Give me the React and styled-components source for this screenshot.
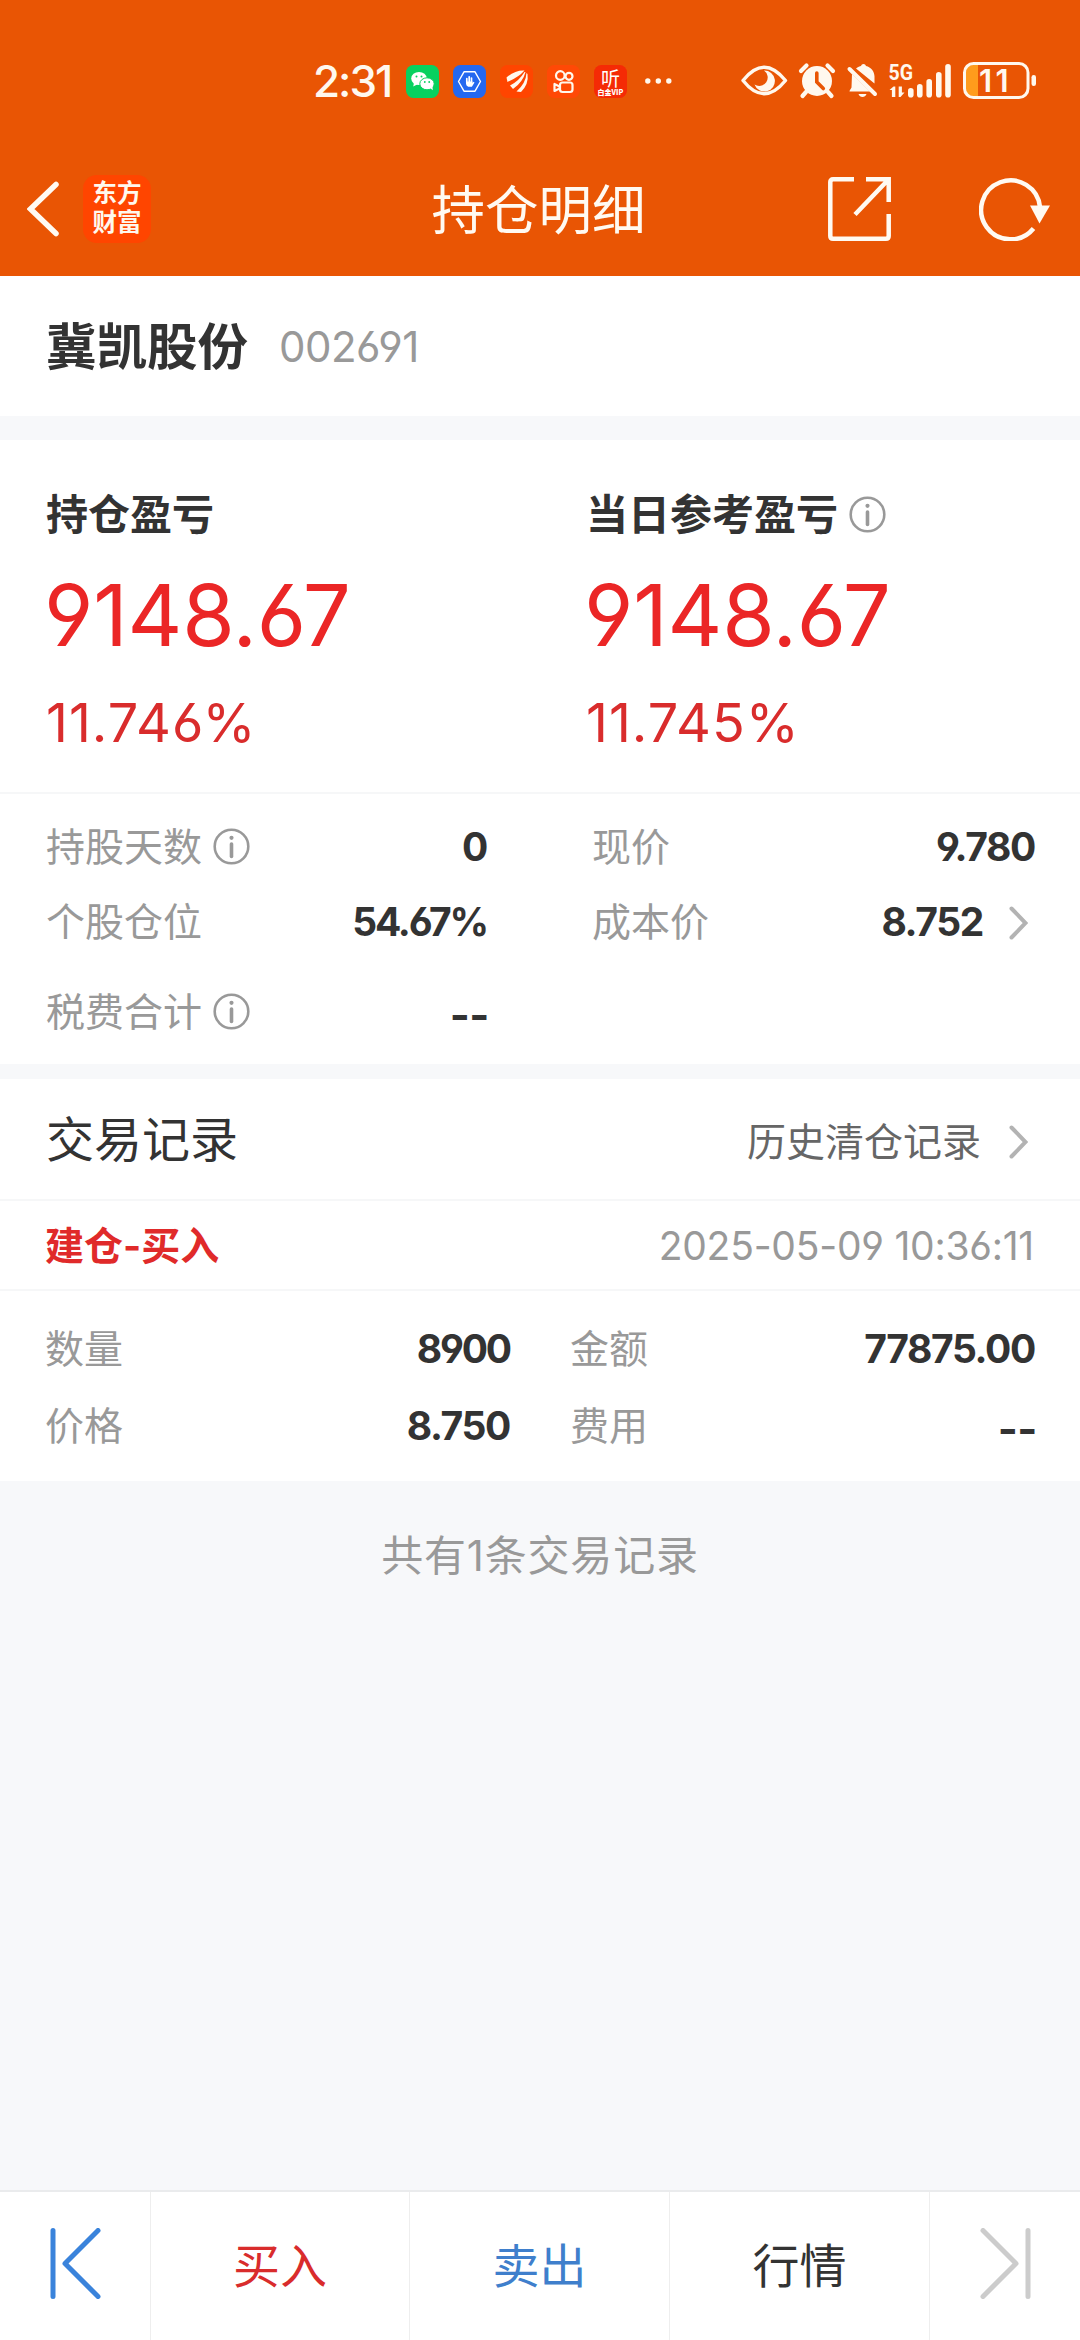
import styled, { createGlobalStyle } from "styled-components"

const GlobalStyle = createGlobalStyle`
  body {
    margin: 0;
    background-color: #f7f8fa;
    font-family: "Inter", "Noto Sans CJK SC", sans-serif;
    font-feature-settings: "cv03", "cv04";
    line-height: 1.4;
    color: #333333;
  }
`;

const Page = styled.div`
  width: 1080px;
  height: 2340px;
  display: flex;
  flex-direction: column;
  overflow: hidden;
`;

const StatusBar = styled.div`
  height: 109px;
  padding: 53px 44px 0 313px;
  box-sizing: border-box;
  display: flex;
  align-items: center;
  background-color: #e95504;
  color: #fff8ee;
`;

const Clock = styled.span`
  width: 93px;
  font-size: 44px;
  font-weight: 500;
  line-height: 56px;
  letter-spacing: -2px;
`;

const AppIcons = styled.div`
  display: flex;
  gap: 14px;
`;

const AppIcon = styled.svg`
  width: 33px;
  height: 33px;
  display: block;
`;

const Dots = styled.svg`
  margin-left: 18px;
`;

const SystemIcons = styled.svg`
  margin-left: auto;
  display: block;
`;

const Header = styled.header`
  height: 167px;
  flex: none;
  padding: 32px 30px 0 27px;
  box-sizing: border-box;
  display: grid;
  grid-template-columns: 1fr auto 1fr;
  align-items: center;
  background-color: #e95504;
`;

const HeaderSide = styled.div`
  display: flex;
  align-items: center;
  gap: ${(props) => props.$gap};
  justify-content: ${(props) => props.$justify || "flex-start"};
`;

const BrandLogo = styled.div`
  width: 68px;
  height: 68px;
  padding-bottom: 2px;
  box-sizing: border-box;
  display: flex;
  flex-direction: column;
  align-items: center;
  justify-content: center;
  border-radius: 14px;
  background-color: #ff4500;
  color: #fff8ee;
  font-size: 24.5px;
  font-weight: 700;
  line-height: 29px;
`;

const Title = styled.h1`
  margin: 0;
  padding-top: 5px;
  font-size: 53.5px;
  font-weight: 400;
  line-height: 72px;
  color: #fffaf2;
`;

const Section = styled.section`
  background-color: #ffffff;
  margin-bottom: ${(props) => props.$gap || "0"};
`;

const StockRow = styled.div`
  height: 140px;
  padding: 2px 46px 0;
  box-sizing: border-box;
  display: flex;
  align-items: center;
  gap: 31px;
`;

const StockName = styled.h2`
  margin: 0;
  font-size: 50.5px;
  font-weight: 700;
`;

const Num = styled.span`
  font-size: ${(props) => props.$size || "39px"};
  font-weight: ${(props) => props.$weight || 700};
  letter-spacing: ${(props) => props.$spacing || "-0.035em"};
  color: ${(props) => props.$color || "#333333"};
`;

// placeholder for a value that is not known yet
const Empty = styled(Num)`
  padding-top: 3px;
  font-size: 43px;
  line-height: 50px;
  letter-spacing: -0.01em;
  margin-right: -2px;
`;

const Profits = styled.div`
  height: 354px;
  box-sizing: border-box;
  padding: 45px 46px 0;
  display: grid;
  grid-template-columns: 540px 1fr;
  border-bottom: 2px solid #f6f7f8;
`;

const Profit = styled.div`
  display: flex;
  flex-direction: column;
`;

const ProfitLabel = styled.div`
  display: flex;
  align-items: center;
  gap: 11px;
  height: 60px;
  font-size: 42px;
  font-weight: 700;
`;

const ProfitValue = styled(Num)`
  margin: 21px 0 0 -2px;
  line-height: 100px;
`;

const ProfitRate = styled(Num)`
  margin-top: 27px;
  line-height: 60px;
`;

const Facts = styled.div`
  height: 270px;
  padding: 16px 45px 0 46px;
  box-sizing: border-box;
  display: grid;
  grid-template-columns: 441px 443px;
  column-gap: 105px;
  grid-template-rows: 75px 75px 105px;
`;

const Fact = styled.div`
  display: flex;
  align-items: center;
  justify-content: space-between;
`;

const FactLabel = styled.span`
  display: flex;
  align-items: center;
  gap: 11px;
  font-size: 39px;
  color: #999999;
`;

const FactValue = styled.span`
  display: flex;
  align-items: center;
  gap: 26px;
  padding-right: ${(props) => (props.$link ? "7px" : "0")};
`;

const InfoIcon = styled.svg`
  margin-bottom: 2px;
`;

const RecordsHead = styled.div`
  height: 122px;
  padding: 1px 52px 0 46px;
  display: flex;
  align-items: center;
  justify-content: space-between;
  font-size: 48px;
  border-bottom: 2px solid #f6f7f8;
  box-sizing: border-box;
`;

const HistoryLink = styled.a`
  padding-top: 5px;
  display: flex;
  align-items: center;
  gap: 28px;
  font-size: 39px;
  color: #666666;
`;

const RecordTitle = styled.div`
  height: 90px;
  padding: 2px 46px 0 45px;
  display: flex;
  align-items: center;
  justify-content: space-between;
  font-size: 39px;
  font-weight: 700;
  color: #e02a2a;
  border-bottom: 2px solid #f6f7f8;
  box-sizing: border-box;
`;

const RecordBody = styled.div`
  height: 190px;
  padding: 20px 45px 0;
  box-sizing: border-box;
  display: grid;
  grid-template-columns: 465px 465px;
  column-gap: 60px;
  grid-template-rows: 77px 77px;
`;

const Total = styled.p`
  margin: 43px 0 0;
  text-align: center;
  font-size: 42px;
  letter-spacing: 0.8px;
  line-height: 63px;
  color: #999999;
`;

const TabBar = styled.nav`
  margin-top: auto;
  height: 150px;
  flex: none;
  display: grid;
  grid-template-columns: 151px 259px 260px 260px 150px;
  background-color: #ffffff;
  border-top: 2px solid #eaebed;
  box-sizing: border-box;
`;

const Tab = styled.div`
  padding-bottom: ${(props) => (props.$color ? "1px" : "6px")};
  display: flex;
  align-items: center;
  justify-content: center;
  font-size: 47px;
  color: ${(props) => props.$color};
  border-right: 1px solid #eeeeee;

  &:last-child {
    border-right: none;
  }
`;

const Info = () => (
  <InfoIcon width="37" height="37" viewBox="0 0 37 37" fill="none" stroke="#999999">
    <circle cx="18.5" cy="18.5" r="16.8" strokeWidth="2.6" />
    <path d="M18.5 16v12.5" strokeWidth="3.6" strokeLinecap="round" />
    <circle cx="18.5" cy="9.8" r="2.1" fill="#999999" stroke="none" />
  </InfoIcon>
)

const Chevron = () => (
  <svg width="19" height="34" viewBox="0 0 19 34" fill="none" stroke="#b3b3b3" strokeWidth="4" strokeLinecap="round">
    <path d="M2.5 2.5 16.5 17 2.5 31.5" />
  </svg>
)

const StatusIcons = () => (
  <SystemIcons width="296" height="40" viewBox="740 61 296 40" fill="#fff8ee">
    {/* eye comfort */}
    <path d="M743 80.5Q764 54 785.5 80.5Q764 107 743 80.5Z" fill="none" stroke="#fff8ee" strokeWidth="3.4" strokeLinejoin="round" />
    <path d="M764 70.5a10.5 10.5 0 1 1-9.5 14a7.5 7.5 0 0 0 9.5-14z" />
    {/* alarm */}
    <circle cx="817" cy="81" r="15" />
    <path d="M801 71l5.5-5.5M833 71l-5.5-5.5M806 92l-3.5 4M828 92l3.5 4" stroke="#fff8ee" strokeWidth="4.2" strokeLinecap="round" />
    <path d="M816.8 73v9l6.5 6.5" fill="none" stroke="#e95504" strokeWidth="3.6" strokeLinecap="round" />
    {/* muted bell */}
    <path d="M852 74L870 91.5H849.5c0-1.5 1.5-2.5 2-4z M856 68.5c1.8-1.4 4-2.2 5-2.4c.6-2.8 4.4-2.8 5 0c5 1.2 8.5 5.4 8.5 10.5v7z M858.5 94h8c-1.2 4-6.8 4-8 0z" />
    <path d="M849.5 69 875 94" stroke="#fff8ee" strokeWidth="4" strokeLinecap="round" />
    {/* network */}
    <text x="888.5" y="80" fontFamily="Roboto" fontWeight="700" fontSize="22" textLength="24.5" lengthAdjust="spacingAndGlyphs">5G</text>
    <path d="M889.5 90l4-3.6h1.8V97h-3.4v-7zM904.5 92.5l-4 4.5h-1.8V86.5h3.2v6z" />
    <rect x="908" y="88" width="5.6" height="9.5" rx="2.8" />
    <rect x="917" y="84" width="5.6" height="13.5" rx="2.8" />
    <rect x="926.4" y="79" width="5.6" height="18.5" rx="2.8" />
    <rect x="936" y="72" width="5.6" height="25.5" rx="2.8" />
    <rect x="945.2" y="64" width="5.6" height="33.5" rx="2.8" />
    {/* battery */}
    <path d="M978 65h-5q-7 0-7 7v17q0 7 7 7h5z" fill="#ff9c1c" />
    <rect x="964.5" y="63.5" width="63.5" height="34" rx="9" fill="none" stroke="#fff8ee" strokeWidth="3" />
    <rect x="1031.5" y="75" width="4.5" height="11" rx="2.2" />
    <text x="979" y="92" fontFamily="Inter" fontWeight="600" fontSize="31" letterSpacing="3.5">11</text>
  </SystemIcons>
)

const facts = [
  { label: "持股天数", info: true, value: "0" },
  { label: "现价", value: "9.780" },
  { label: "个股仓位", value: "54.67%", spacing: "-0.055em" },
  { label: "成本价", value: "8.752", link: true },
  { label: "税费合计", info: true },
]

const record = [
  { label: "数量", value: "8900", spacing: "-0.055em" },
  { label: "金额", value: "77875.00" },
  { label: "价格", value: "8.750" },
  { label: "费用" },
]

const FactItem = ({ label, info, value, link, spacing }) => (
  <Fact>
    <FactLabel>
      {label}
      {info && <Info />}
    </FactLabel>
    <FactValue $link={link}>
      {value ? <Num $spacing={spacing}>{value}</Num> : <Empty>--</Empty>}
      {link && <Chevron />}
    </FactValue>
  </Fact>
)

const ProfitItem = ({ label, info, value, rate }) => (
  <Profit>
    <ProfitLabel>
      {label}
      {info && <Info />}
    </ProfitLabel>
    <ProfitValue $size="85px" $weight={400} $spacing="-0.003em" $color="#eb2626">{value}</ProfitValue>
    <ProfitRate $size="54px" $weight={400} $spacing="0.018em" $color="#d92c2c">{rate}</ProfitRate>
  </Profit>
)

export default function App() {
  return (
    <Page>
      <GlobalStyle />
      <StatusBar>
        <Clock>2:31</Clock>
        <AppIcons>
          <AppIcon viewBox="0 0 33 33">
            <rect width="33" height="33" rx="7.5" fill="#07d15f" />
            <ellipse cx="13" cy="13.5" rx="7.8" ry="6.6" fill="#fff" />
            <path d="M8 18l-.8 3.5 4-2z" fill="#fff" />
            <ellipse cx="21" cy="18.8" rx="7.2" ry="6" fill="#fff" stroke="#07d15f" strokeWidth="1" />
            <path d="M24 23l2.8 2.3-.3-3.8z" fill="#fff" />
            <g fill="#07d15f">
              <circle cx="10.5" cy="11.5" r="1" />
              <circle cx="15.5" cy="11.5" r="1" />
              <circle cx="18.8" cy="17" r=".9" />
              <circle cx="23.2" cy="17" r=".9" />
            </g>
          </AppIcon>
          <AppIcon viewBox="0 0 33 33">
            <rect width="33" height="33" rx="7.5" fill="#2468f0" />
            <path d="M11 6.8h11L27.5 16.5 22 26.2H11L5.5 16.5z" fill="none" stroke="#fff" strokeWidth="1.4" strokeLinejoin="round" />
            <path d="M13.8 13.5v4M16.2 11.8v5M18.5 13v4" stroke="#fff" strokeWidth="1.7" strokeLinecap="round" />
            <path d="M13 16.5h6.5v1.5l1-1.3 1 .8-2.6 4.3h-3.7q-2.2-1-2.2-3z" fill="#fff" />
          </AppIcon>
          <AppIcon viewBox="0 0 33 33">
            <rect width="33" height="33" rx="7.5" fill="#ff4500" />
            <path d="M6.5 12.5Q15 5 24.5 5.5Q19 12 7.5 17z" fill="#fff8ee" />
            <path d="M24.5 7Q19 16 10 20.5l3 3.5Q23 17 25.5 7z" fill="#fff8ee" />
            <path d="M26.5 8Q26 18 16.5 26.5l4.5.5Q29 19 27.5 9z" fill="#fff8ee" />
          </AppIcon>
          <AppIcon viewBox="0 0 33 33" fill="none" stroke="#fff8ee" strokeWidth="2.2">
            <rect width="33" height="33" rx="7.5" fill="#ff4906" stroke="none" />
            <circle cx="13.3" cy="10.5" r="4.3" />
            <circle cx="22" cy="11.3" r="3.5" />
            <rect x="13" y="17.5" width="12.5" height="9.5" rx="2.5" />
            <path d="M12.5 21.5 7.5 19v7l5-2.5" strokeLinejoin="round" />
          </AppIcon>
          <AppIcon viewBox="0 0 33 33" fill="#fff">
            <rect width="33" height="33" rx="7.5" fill="#f52a05" />
            <text x="16.5" y="21" fontFamily="Noto Sans CJK SC" fontSize="19" textAnchor="middle">听</text>
            <text x="16.5" y="29.5" fontFamily="Noto Sans CJK SC" fontWeight="900" fontSize="7" textAnchor="middle">白金VIP</text>
          </AppIcon>
        </AppIcons>
        <Dots width="27" height="6" viewBox="0 0 27 6" fill="#fff8ee">
          <circle cx="2.8" cy="3" r="2.7" />
          <circle cx="13.3" cy="3" r="2.7" />
          <circle cx="23.8" cy="3" r="2.7" />
        </Dots>
        <StatusIcons />
      </StatusBar>

      <Header>
        <HeaderSide $gap="24px">
          <svg width="32" height="56" viewBox="0 0 32 56" fill="none" stroke="#fffaf2" strokeWidth="5.5" strokeLinecap="round">
            <path d="M29 3.5 3.5 28 29 52.5" />
          </svg>
          <BrandLogo>
            <span>东方</span>
            <span>财富</span>
          </BrandLogo>
        </HeaderSide>
        <Title>持仓明细</Title>
        <HeaderSide $gap="88px" $justify="flex-end">
          <svg width="63" height="64" viewBox="0 0 63 64" fill="none" stroke="#fffaf2" strokeWidth="4.5">
            <path d="M26 2.3H5Q2.3 2.3 2.3 5v54q0 2.7 2.7 2.7h53q2.7 0 2.7-2.7V37M38 2.3h22.7V25M60 3 27 37.5" />
          </svg>
          <svg width="71" height="64" viewBox="0 0 71 64" fill="none" stroke="#fffaf2" strokeWidth="4.5">
            <path d="M54.5 51.5A29.5 29.5 0 1 1 61 30" />
            <path d="M51 28.5h20L60.5 46.5z" fill="#fffaf2" stroke="none" />
          </svg>
        </HeaderSide>
      </Header>

      <Section $gap="24px">
        <StockRow>
          <StockName>冀凯股份</StockName>
          <Num $size="42px" $weight={400} $spacing="-0.012em" $color="#999999">002691</Num>
        </StockRow>
      </Section>

      <Section $gap="15px">
        <Profits>
          <ProfitItem label="持仓盈亏" value="9148.67" rate="11.746%" />
          <ProfitItem label="当日参考盈亏" info value="9148.67" rate="11.745%" />
        </Profits>
        <Facts>
          {facts.map((fact) => (
            <FactItem key={fact.label} {...fact} />
          ))}
        </Facts>
      </Section>

      <Section>
        <RecordsHead>
          交易记录
          <HistoryLink>历史清仓记录 <Chevron /></HistoryLink>
        </RecordsHead>
        <RecordTitle>
          建仓-买入
          <Num $weight={400} $spacing="-0.006em" $color="#999999">2025-05-09 10:36:11</Num>
        </RecordTitle>
        <RecordBody>
          {record.map((item) => (
            <FactItem key={item.label} {...item} />
          ))}
        </RecordBody>
      </Section>

      <Total>共有1条交易记录</Total>

      <TabBar>
        <Tab>
          <svg width="51" height="71" viewBox="0 0 51 71" fill="none" stroke="#3a83db" strokeWidth="5" strokeLinecap="round" strokeLinejoin="round">
            <path d="M3 2.5v66M48 2.5 15 35.5 48 68.5" />
          </svg>
        </Tab>
        <Tab $color="#d92c2c">买入</Tab>
        <Tab $color="#3f7fcc">卖出</Tab>
        <Tab $color="#333333">行情</Tab>
        <Tab>
          <svg width="51" height="71" viewBox="0 0 51 71" fill="none" stroke="#cccccc" strokeWidth="5" strokeLinecap="round" strokeLinejoin="round">
            <path d="M48 2.5v66M3 2.5 36 35.5 3 68.5" />
          </svg>
        </Tab>
      </TabBar>
    </Page>
  )
}
